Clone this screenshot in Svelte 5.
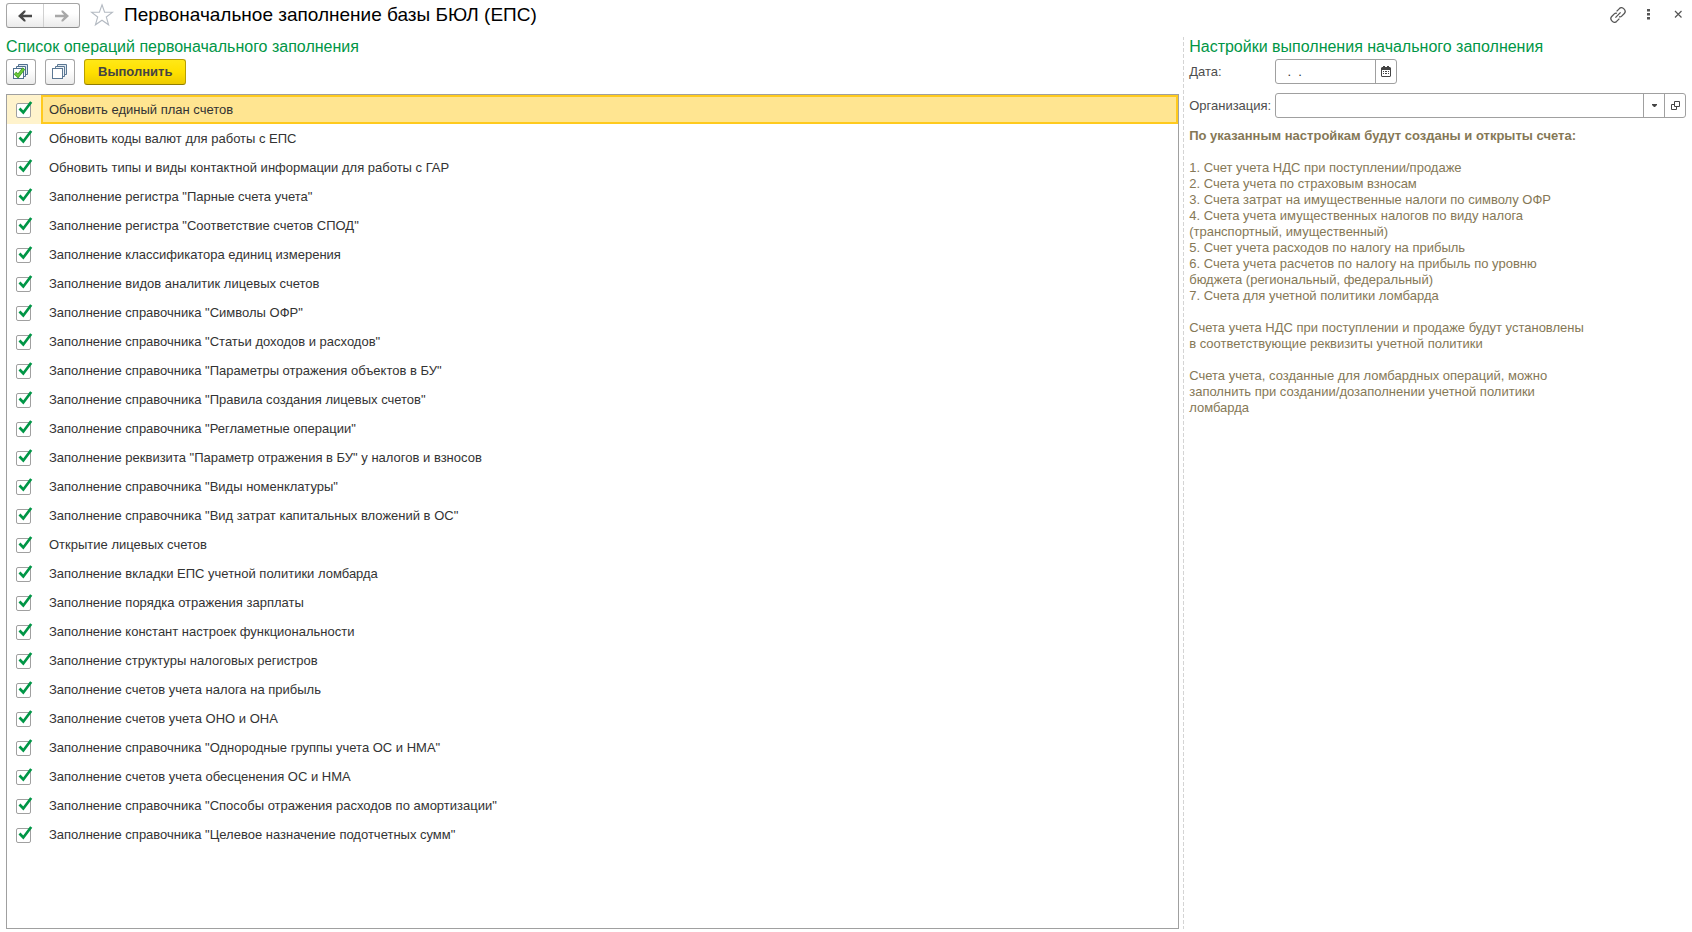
<script>
  let operations = $state([
    'Обновить единый план счетов',
    'Обновить коды валют для работы с ЕПС',
    'Обновить типы и виды контактной информации для работы с ГАР',
    'Заполнение регистра "Парные счета учета"',
    'Заполнение регистра "Соответствие счетов СПОД"',
    'Заполнение классификатора единиц измерения',
    'Заполнение видов аналитик лицевых счетов',
    'Заполнение справочника "Символы ОФР"',
    'Заполнение справочника "Статьи доходов и расходов"',
    'Заполнение справочника "Параметры отражения объектов в БУ"',
    'Заполнение справочника "Правила создания лицевых счетов"',
    'Заполнение справочника "Регламетные операции"',
    'Заполнение реквизита "Параметр отражения в БУ" у налогов и взносов',
    'Заполнение справочника "Виды номенклатуры"',
    'Заполнение справочника "Вид затрат капитальных вложений в ОС"',
    'Открытие лицевых счетов',
    'Заполнение вкладки ЕПС учетной политики ломбарда',
    'Заполнение порядка отражения зарплаты',
    'Заполнение констант настроек функциональности',
    'Заполнение структуры налоговых регистров',
    'Заполнение счетов учета налога на прибыль',
    'Заполнение счетов учета ОНО и ОНА',
    'Заполнение справочника "Однородные группы учета ОС и НМА"',
    'Заполнение счетов учета обесценения ОС и НМА',
    'Заполнение справочника "Способы отражения расходов по амортизации"',
    'Заполнение справочника "Целевое назначение подотчетных сумм"'
  ].map((name) => ({ name, checked: true })));

  let selected = $state(0);
  let date = $state('  .  .');
  let organization = $state('');

  function setAll(value) {
    for (const operation of operations) operation.checked = value;
  }
</script>

<div class="page">
  <header>
    <div class="nav">
      <button type="button" aria-label="Назад">
        <svg width="14" height="12" viewBox="0 0 14 12"><path d="M0 6L6 .5H7.500V2L5 4.800H14V7.200H5L7.500 10V11.500H6Z" fill="#484848" /></svg>
      </button>
      <button type="button" aria-label="Вперед">
        <svg width="14" height="12" viewBox="0 0 14 12"><path d="M14 6L8 .5H6.500V2L9 4.800H0V7.200H9L6.500 10V11.500H8Z" fill="#a8a8a8" /></svg>
      </button>
    </div>
    <button type="button" class="plain star" aria-label="Избранное">
      <svg width="24" height="24" viewBox="0 0 24 24"><path d="M12 1.800L14.600 9.200H22.600L16.300 14L18.600 21.800L12 17.200L5.400 21.800L7.700 14L1.400 9.200H9.400Z" fill="#fff" stroke="#b4bac2" stroke-width="1.100" /></svg>
    </button>
    <h1>Первоначальное заполнение базы БЮЛ (ЕПС)</h1>
    <div class="window">
      <button type="button" class="plain" aria-label="Получить ссылку">
        <svg width="16" height="16" viewBox="0 0 16 16" fill="none" stroke="#555" stroke-width="1.300">
          <path d="M6.600 4.400L9.400 1.600C10.700 .4 12.500 .5 13.900 1.900C15.300 3.300 15.500 5.200 14.300 6.500L11.700 9.100C10.900 9.900 10 10 9.100 9.700" />
          <path d="M9.400 11.600L6.600 14.400C5.300 15.600 3.500 15.500 2.100 14.100C.7 12.700 .5 10.800 1.700 9.500L4.300 6.900C5.100 6.100 6 6 6.900 6.300" />
          <path d="M5.400 10.600L10.600 5.400" />
        </svg>
      </button>
      <button type="button" class="plain" aria-label="Еще">
        <svg width="16" height="16" viewBox="0 0 16 16" fill="#555"><path d="M7 2h3v2.600H7zM7 6h3v2.600H7zM7 10h3v2.600H7z" /></svg>
      </button>
      <button type="button" class="plain" aria-label="Закрыть">
        <svg width="16" height="16" viewBox="0 0 16 16"><path d="M5 4L11.500 10.500M11.500 4L5 10.500" stroke="#555" stroke-width="1.200" /></svg>
      </button>
    </div>
  </header>

  <main>
    <section class="operations">
      <h2>Список операций первоначального заполнения</h2>
      <div class="toolbar">
        <button type="button" class="tool" aria-label="Установить флажки" onclick={() => setAll(true)}>
          <svg width="16" height="16" viewBox="0 0 16 16" stroke="#4f6f8f">
            <path d="M5.500 3V.5H14.500V10.500H13" fill="#dfe8f0" />
            <path d="M3.500 5V2.500H12.500V12.500H11" fill="#eef3f7" />
            <rect x=".5" y="4.500" width="10" height="10" fill="#fff" />
            <path d="M2 9L5 12L10.800 4.500" fill="none" stroke="#3a9a22" stroke-width="3.400" />
            <path d="M2.300 9.300L5 11.800L10.500 4.900" fill="none" stroke="#6cc93a" stroke-width="2" />
          </svg>
        </button>
        <button type="button" class="tool" aria-label="Снять флажки" onclick={() => setAll(false)}>
          <svg width="16" height="16" viewBox="0 0 16 16" stroke="#5c7894">
            <path d="M5.500 3V.5H14.500V10.500H13" fill="#dfe8f0" />
            <path d="M3.500 5V2.500H12.500V12.500H11" fill="#eef3f7" />
            <rect x=".5" y="4.500" width="10" height="10" fill="#fff" />
          </svg>
        </button>
        <button type="button" class="run">Выполнить</button>
      </div>
      <ul>
        {#each operations as operation, index}
          <li class:selected={index === selected}>
            <label>
              <span class="mark">
                <input type="checkbox" bind:checked={operation.checked} onfocus={() => (selected = index)} />
                <svg width="17" height="17" viewBox="0 0 17 17"><path d="M3.500 7.500L7.300 11.500L15.200 1" fill="none" stroke="#009646" stroke-width="2.700" /></svg>
              </span>
              <span class="name">{operation.name}</span>
            </label>
          </li>
        {/each}
      </ul>
    </section>

    <section class="settings">
      <h2>Настройки выполнения начального заполнения</h2>
      <div class="field">
        <label for="date">Дата:</label>
        <div class="control date">
          <input id="date" type="text" bind:value={date} />
          <button type="button" aria-label="Выбрать дату">
            <svg width="10" height="11" viewBox="0 0 10 11" fill="#444">
              <path d="M1 1h1V0h2v1h2V0h2v1h1l1 1v8l-1 1H1l-1-1V2z" />
              <path d="M1 4h8v6H1z" fill="#fff" />
              <path d="M2 5h1v1H2zM4 5h2v1H4zM7 5h1v1H7zM2 7h1v1H2zM4 7h2v1H4zM7 7h1v1H7z" />
            </svg>
          </button>
        </div>
      </div>
      <div class="field">
        <label for="organization">Организация:</label>
        <div class="control">
          <input id="organization" type="text" bind:value={organization} />
          <button type="button" aria-label="Выбрать из списка">
            <svg width="5" height="3" viewBox="0 0 5 3"><path d="M0 0H5V1L3 3H2L0 1Z" fill="#444" /></svg>
          </button>
          <button type="button" aria-label="Открыть">
            <svg width="9" height="9" viewBox="0 0 9 9" fill="none" stroke="#444"><path d="M3.500 .5H8.500V5.500H3.500ZM3 3.500H.5V8.500H5.500V6" /></svg>
          </button>
        </div>
      </div>
      <div class="notes">
        <p><strong>По указанным настройкам будут созданы и открыты счета:</strong></p>
        <p>
          1. Счет учета НДС при поступлении/продаже<br />
          2. Счета учета по страховым взносам<br />
          3. Счета затрат на имущественные налоги по символу ОФР<br />
          4. Счета учета имущественных налогов по виду налога (транспортный, имущественный)<br />
          5. Счет учета расходов по налогу на прибыль<br />
          6. Счета учета расчетов по налогу на прибыль по уровню бюджета (региональный, федеральный)<br />
          7. Счета для учетной политики ломбарда
        </p>
        <p>Счета учета НДС при поступлении и продаже будут установлены в соответствующие реквизиты учетной политики</p>
        <p>Счета учета, созданные для ломбардных операций, можно заполнить при создании/дозаполнении учетной политики ломбарда</p>
      </div>
    </section>
  </main>
</div>

<style>
  :global(body) {
    margin: 0;
    background: #fff;
  }
  .page,
  .page * {
    box-sizing: border-box;
  }
  .page {
    display: flex;
    flex-direction: column;
    min-height: 100vh;
    padding: 3px 6px;
    font: 13px/16px "Liberation Sans", Arial, sans-serif;
    color: #333;
  }
  button,
  input {
    margin: 0;
    font: inherit;
    color: inherit;
  }
  button {
    display: flex;
    align-items: center;
    justify-content: center;
    padding: 0;
    cursor: pointer;
  }
  svg {
    display: block;
    flex: none;
  }
  header {
    display: flex;
    align-items: flex-start;
    height: 25px;
  }
  .nav {
    display: flex;
    height: 25px;
    border: 1px solid #a6a6a6;
    border-bottom-color: #8c8c8c;
    border-radius: 3px;
    background: linear-gradient(#fff 40%, #ebebeb);
  }
  .nav button {
    width: 36px;
    border: 0;
    background: none;
  }
  .nav button + button {
    border-left: 1px solid #d0d0d0;
  }
  .plain {
    border: 0;
    background: none;
  }
  .star {
    margin-left: 10px;
  }
  h1 {
    flex: 1;
    margin: 0 0 0 10px;
    font-size: 19px;
    line-height: 24px;
    font-weight: 400;
    color: #000;
  }
  .window {
    display: flex;
    gap: 14px;
    padding-top: 4px;
  }
  main {
    flex: 1;
    display: grid;
    grid-template-columns: minmax(0, 7fr) minmax(0, 3fr);
    gap: 4px;
    padding-top: 9px;
  }
  h2 {
    margin: 0;
    font-size: 16px;
    line-height: 20px;
    font-weight: 400;
    color: #009646;
  }
  .operations {
    display: flex;
    flex-direction: column;
  }
  .toolbar {
    display: flex;
    gap: 9px;
    padding: 2px 0 9px;
  }
  .tool {
    width: 30px;
    height: 26px;
    border: 1px solid #a6a6a6;
    border-bottom-color: #8c8c8c;
    border-radius: 3px;
    background: linear-gradient(#fff 40%, #ebebeb);
  }
  .run {
    height: 26px;
    padding: 0 13px;
    border: 1px solid #b89f00;
    border-bottom-color: #917d00;
    border-radius: 3px;
    background: linear-gradient(#ffe817, #ffe000 50%, #edcb00);
    font-weight: 700;
    color: #444;
  }
  ul {
    flex: 1;
    margin: 0;
    padding: 0;
    border: 1px solid #a0a0a0;
    list-style: none;
  }
  li label {
    display: flex;
    height: 29px;
  }
  .mark {
    display: grid;
    align-content: center;
    width: 34px;
    padding-left: 9px;
  }
  .mark input,
  .mark svg {
    grid-area: 1 / 1;
    align-self: end;
  }
  .mark svg {
    align-self: start;
    visibility: hidden;
    pointer-events: none;
  }
  .mark input:checked + svg {
    visibility: visible;
  }
  .mark input {
    appearance: none;
    width: 15px;
    height: 15px;
    border: 1px solid #a0a0a0;
    border-radius: 2px;
    background: #fff;
    outline: 0;
  }
  .name {
    flex: 1;
    padding: 5px 6px;
    border: 2px solid transparent;
  }
  .selected {
    background: #fff3cc;
  }
  .selected .name {
    border-color: #ffca1d;
    background: #ffe591;
  }
  .settings {
    padding-left: 5px;
    border-left: 1px solid;
    border-image: repeating-linear-gradient(#d4d4d4 0 4px, transparent 4px 6px) 1;
  }
  .field {
    display: grid;
    grid-template-columns: 86px minmax(0, 1fr);
    align-items: center;
    padding-top: 2px;
  }
  .field + .field {
    padding-top: 9px;
  }
  .field label {
    color: #4d4d4d;
  }
  .control {
    display: flex;
    height: 25px;
    border: 1px solid #a0a0a0;
    border-radius: 3px;
    background: #fff;
  }
  .date {
    width: 122px;
  }
  .control input {
    flex: 1;
    min-width: 0;
    padding: 0 4px;
    border: 0;
    background: none;
    outline: 0;
    white-space: pre;
  }
  .control button {
    width: 21px;
    border: 0;
    border-left: 1px solid #a0a0a0;
    background: none;
  }
  .notes {
    max-width: 400px;
    padding-top: 10px;
    color: #857856;
  }
  p {
    margin: 0 0 16px;
  }
</style>
